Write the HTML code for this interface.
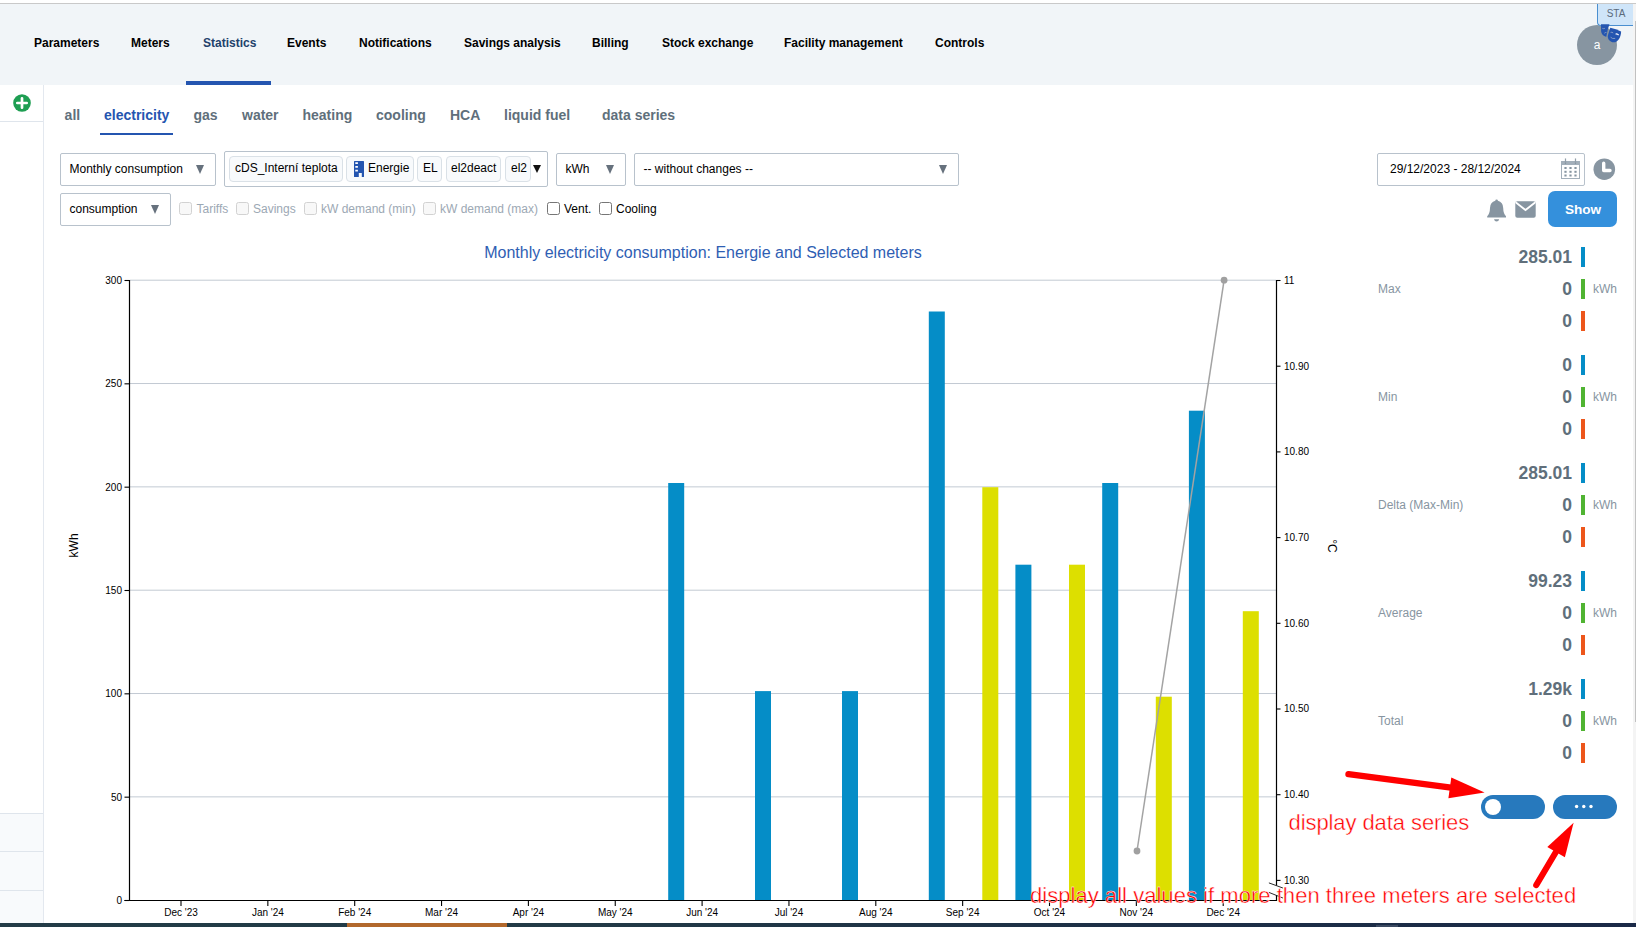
<!DOCTYPE html>
<html lang="en">
<head>
<meta charset="utf-8">
<title>Statistics</title>
<style>
*{box-sizing:border-box;margin:0;padding:0}
html,body{width:1636px;height:927px;overflow:hidden;background:#fff}
body{position:relative;font-family:"Liberation Sans",Arial,sans-serif;font-size:12px;color:#000}
.abs{position:absolute}
#topline{left:0;top:3px;width:1636px;height:1px;background:#c9c9c9}
#nav{left:0;top:4px;width:1633px;height:81px;background:#f1f5f8}
.nv{position:absolute;top:31px;height:16px;line-height:16px;font-weight:bold;font-size:12px;color:#000;white-space:nowrap}
#navsel{left:186px;top:81px;width:85px;height:4px;background:#2455b0}
#side{left:0;top:85px;width:44px;height:838px;border-right:1px solid #e3e8ef;background:#fff}
.sdiv{position:absolute;left:0;width:43px;height:1px;background:#dfe5ec}
.tb{position:absolute;top:106px;height:18px;line-height:18px;font-weight:bold;font-size:14px;color:#606f7b;white-space:nowrap}
.box{position:absolute;border:1px solid #b8c2cc;border-radius:2px;background:#fff}
.bt{position:absolute;white-space:nowrap;font-size:12px;line-height:14px;color:#000}
.arr{position:absolute;width:0;height:0;border-left:4.7px solid transparent;border-right:4.7px solid transparent;border-top:9.3px solid #66717d}
.tag{position:absolute;top:4px;height:26px;border:1px solid #dae1e7;border-radius:4px;background:#f8fafc;font-size:12px;line-height:23px;white-space:nowrap;color:#000}
.cb{position:absolute;top:202px;width:13px;height:13px;border:1px solid #767676;border-radius:2.5px;background:#fff}
.cb.d{border-color:#d2d2d2;background:#f8f8f8}
.cl{position:absolute;top:202px;height:14px;line-height:14px;font-size:12px;white-space:nowrap;color:#000}
.cl.d{color:#9ca8b4}
.sl{position:absolute;left:1378px;font-size:12px;line-height:14px;color:#8795a1;white-space:nowrap}
.sv{position:absolute;right:64px;font-size:17.5px;line-height:20px;font-weight:bold;color:#606f7b;white-space:nowrap;text-align:right}
.su{position:absolute;left:1593px;font-size:12px;line-height:14px;color:#8795a1;white-space:nowrap}
.bar{position:absolute;left:1581px;width:4px;height:20px}
.red{position:absolute;color:#ff0000;font-size:22px;line-height:26px;white-space:nowrap;-webkit-text-stroke:0.4px #fff;letter-spacing:0.035px}
</style>
</head>
<body>
<div class="abs" id="topline"></div>
<div class="abs" id="nav">
  <span class="nv" style="left:34px">Parameters</span>
  <span class="nv" style="left:131px">Meters</span>
  <span class="nv" style="left:203px;color:#22416b">Statistics</span>
  <span class="nv" style="left:287px">Events</span>
  <span class="nv" style="left:359px">Notifications</span>
  <span class="nv" style="left:464px">Savings analysis</span>
  <span class="nv" style="left:592px">Billing</span>
  <span class="nv" style="left:662px">Stock exchange</span>
  <span class="nv" style="left:784px">Facility management</span>
  <span class="nv" style="left:935px">Controls</span>
</div>
<div class="abs" id="navsel"></div>

<div class="abs" id="side">
  <svg class="abs" style="left:13px;top:9px" width="18" height="18" viewBox="0 0 18 18"><circle cx="9" cy="9" r="8.8" fill="#1e9e52"/><path d="M9 4.3V13.7M4.3 9H13.7" stroke="#fff" stroke-width="2.7" stroke-linecap="round"/></svg>
  <div class="sdiv" style="top:36px"></div>
  <div class="abs" style="left:0;top:728px;width:43px;height:110px;background:#f8fafc"></div>
  <div class="sdiv" style="top:728px"></div>
  <div class="sdiv" style="top:766px"></div>
  <div class="sdiv" style="top:805px"></div>
</div>
<!-- tabs -->
<span class="tb" style="left:64.6px">all</span>
<span class="tb" style="left:104px;color:#2455b0">electricity</span>
<div class="abs" style="left:100px;top:133px;width:73px;height:2px;background:#2455b0"></div>
<span class="tb" style="left:193.5px">gas</span>
<span class="tb" style="left:242px">water</span>
<span class="tb" style="left:302.5px">heating</span>
<span class="tb" style="left:376px">cooling</span>
<span class="tb" style="left:450px">HCA</span>
<span class="tb" style="left:504px">liquid fuel</span>
<span class="tb" style="left:602px">data series</span>
<!-- filter row 1 -->
<div class="box" style="left:60px;top:153px;width:156px;height:33px"><span class="bt" style="left:8.5px;top:8px">Monthly consumption</span><i class="arr" style="left:134.9px;top:11px"></i></div>
<div class="box" style="left:224px;top:151px;width:324px;height:36px">
  <span class="tag" style="left:4px;width:114px;padding-left:5px">cDS_Interní teplota</span>
  <span class="tag" style="left:121px;width:68px;padding-left:21px">Energie</span>
  <span class="tag" style="left:192px;width:25px;padding-left:5px">EL</span>
  <span class="tag" style="left:221px;width:55px;padding-left:4px">el2deact</span>
  <span class="tag" style="left:280px;width:26px;padding-left:5px">el2</span>
  <i class="arr" style="left:308.2px;top:13px;border-top-color:#111;border-left-width:4.3px;border-right-width:4.3px;border-top-width:8.2px"></i>
</div>
<div class="box" style="left:556px;top:153px;width:70px;height:33px"><span class="bt" style="left:8.5px;top:8px">kWh</span><i class="arr" style="left:49.3px;top:11px"></i></div>
<div class="box" style="left:634px;top:153px;width:325px;height:33px"><span class="bt" style="left:8.5px;top:8px">-- without changes --</span><i class="arr" style="left:303.5px;top:11px"></i></div>
<div class="box" style="left:1377px;top:153px;width:208px;height:33px"><span class="bt" style="left:12px;top:8px">29/12/2023 - 28/12/2024</span></div>
<!-- filter row 2 -->
<div class="box" style="left:60px;top:193px;width:111px;height:33px"><span class="bt" style="left:8.5px;top:8px">consumption</span><i class="arr" style="left:89.6px;top:11px"></i></div>
<i class="cb d" style="left:179px"></i><span class="cl d" style="left:196.5px">Tariffs</span>
<i class="cb d" style="left:236px"></i><span class="cl d" style="left:253px">Savings</span>
<i class="cb d" style="left:304px"></i><span class="cl d" style="left:321px">kW demand (min)</span>
<i class="cb d" style="left:423px"></i><span class="cl d" style="left:440px">kW demand (max)</span>
<i class="cb" style="left:547px"></i><span class="cl" style="left:564px">Vent.</span>
<i class="cb" style="left:599px"></i><span class="cl" style="left:616px">Cooling</span>
<div class="abs" style="left:1548px;top:191px;width:69px;height:36px;border-radius:7px;background:#3490dc;color:#fff;font-weight:bold;font-size:13.6px;line-height:37px;text-align:center;padding-left:1px">Show</div>
<svg class="abs" style="left:0;top:235px" width="1360" height="688" viewBox="0 235 1360 688" font-family="Liberation Sans, Arial, sans-serif">
<text x="703" y="258" text-anchor="middle" font-size="16" fill="#2f5eb3">Monthly electricity consumption: Energie and Selected meters</text>
<path d="M129.5 796.87H1276.5" stroke="#c3cad3" stroke-width="1"/>
<path d="M129.5 693.53H1276.5" stroke="#c3cad3" stroke-width="1"/>
<path d="M129.5 590.20H1276.5" stroke="#c3cad3" stroke-width="1"/>
<path d="M129.5 486.87H1276.5" stroke="#c3cad3" stroke-width="1"/>
<path d="M129.5 383.53H1276.5" stroke="#c3cad3" stroke-width="1"/>
<path d="M129.5 280.20H1276.5" stroke="#c3cad3" stroke-width="1"/>
<rect x="668.2" y="483.0" width="16" height="417.5" fill="#058dc7"/>
<rect x="755" y="691.1" width="16" height="209.4" fill="#058dc7"/>
<rect x="842" y="691.1" width="16" height="209.4" fill="#058dc7"/>
<rect x="928.8" y="311.5" width="16" height="589.0" fill="#058dc7"/>
<rect x="982.3" y="487.2" width="16" height="413.3" fill="#dddf00"/>
<rect x="1015.4" y="564.7" width="16" height="335.8" fill="#058dc7"/>
<rect x="1069" y="564.7" width="16" height="335.8" fill="#dddf00"/>
<rect x="1102.2" y="483.0" width="16" height="417.5" fill="#058dc7"/>
<rect x="1155.8" y="696.7" width="16" height="203.8" fill="#dddf00"/>
<rect x="1188.9" y="410.7" width="16" height="489.8" fill="#058dc7"/>
<rect x="1242.8" y="611.2" width="16" height="289.3" fill="#dddf00"/>
<path d="M1137 851L1224.1 280.2" stroke="#a3a3a3" stroke-width="1.5" fill="none"/>
<circle cx="1137" cy="851" r="3.4" fill="#a0a0a0"/><circle cx="1224.1" cy="280.2" r="3.4" fill="#a0a0a0"/>
<path d="M129.5 280V900.5M124.5 900.5H1276.5" stroke="#000" stroke-width="1.2" fill="none"/>
<path d="M1276.5 280V885.6M1276.5 895.2V901" stroke="#000" stroke-width="1.2" fill="none"/>
<path d="M124.5 900.50H129.5" stroke="#000" stroke-width="1.1"/>
<text x="122" y="904.00" text-anchor="end" font-size="10" fill="#000">0</text>
<path d="M124.5 797.17H129.5" stroke="#000" stroke-width="1.1"/>
<text x="122" y="800.67" text-anchor="end" font-size="10" fill="#000">50</text>
<path d="M124.5 693.83H129.5" stroke="#000" stroke-width="1.1"/>
<text x="122" y="697.33" text-anchor="end" font-size="10" fill="#000">100</text>
<path d="M124.5 590.50H129.5" stroke="#000" stroke-width="1.1"/>
<text x="122" y="594.00" text-anchor="end" font-size="10" fill="#000">150</text>
<path d="M124.5 487.17H129.5" stroke="#000" stroke-width="1.1"/>
<text x="122" y="490.67" text-anchor="end" font-size="10" fill="#000">200</text>
<path d="M124.5 383.83H129.5" stroke="#000" stroke-width="1.1"/>
<text x="122" y="387.33" text-anchor="end" font-size="10" fill="#000">250</text>
<path d="M124.5 280.50H129.5" stroke="#000" stroke-width="1.1"/>
<text x="122" y="284.00" text-anchor="end" font-size="10" fill="#000">300</text>
<path d="M1276.5 280.50H1280.5" stroke="#000" stroke-width="1.1"/>
<text x="1284" y="283.90" font-size="10" fill="#000">11</text>
<path d="M1276.5 366.20H1280.5" stroke="#000" stroke-width="1.1"/>
<text x="1284" y="369.60" font-size="10" fill="#000">10.90</text>
<path d="M1276.5 451.90H1280.5" stroke="#000" stroke-width="1.1"/>
<text x="1284" y="455.30" font-size="10" fill="#000">10.80</text>
<path d="M1276.5 537.60H1280.5" stroke="#000" stroke-width="1.1"/>
<text x="1284" y="541.00" font-size="10" fill="#000">10.70</text>
<path d="M1276.5 623.30H1280.5" stroke="#000" stroke-width="1.1"/>
<text x="1284" y="626.70" font-size="10" fill="#000">10.60</text>
<path d="M1276.5 709.00H1280.5" stroke="#000" stroke-width="1.1"/>
<text x="1284" y="712.40" font-size="10" fill="#000">10.50</text>
<path d="M1276.5 794.70H1280.5" stroke="#000" stroke-width="1.1"/>
<text x="1284" y="798.10" font-size="10" fill="#000">10.40</text>
<path d="M1276.5 880.40H1280.5" stroke="#000" stroke-width="1.1"/>
<text x="1284" y="883.80" font-size="10" fill="#000">10.30</text>
<path d="M181.00 900.5V906" stroke="#000" stroke-width="1.1"/>
<text x="181.00" y="915.8" text-anchor="middle" font-size="10" fill="#000">Dec '23</text>
<path d="M267.85 900.5V906" stroke="#000" stroke-width="1.1"/>
<text x="267.85" y="915.8" text-anchor="middle" font-size="10" fill="#000">Jan '24</text>
<path d="M354.70 900.5V906" stroke="#000" stroke-width="1.1"/>
<text x="354.70" y="915.8" text-anchor="middle" font-size="10" fill="#000">Feb '24</text>
<path d="M441.55 900.5V906" stroke="#000" stroke-width="1.1"/>
<text x="441.55" y="915.8" text-anchor="middle" font-size="10" fill="#000">Mar '24</text>
<path d="M528.40 900.5V906" stroke="#000" stroke-width="1.1"/>
<text x="528.40" y="915.8" text-anchor="middle" font-size="10" fill="#000">Apr '24</text>
<path d="M615.25 900.5V906" stroke="#000" stroke-width="1.1"/>
<text x="615.25" y="915.8" text-anchor="middle" font-size="10" fill="#000">May '24</text>
<path d="M702.10 900.5V906" stroke="#000" stroke-width="1.1"/>
<text x="702.10" y="915.8" text-anchor="middle" font-size="10" fill="#000">Jun '24</text>
<path d="M788.95 900.5V906" stroke="#000" stroke-width="1.1"/>
<text x="788.95" y="915.8" text-anchor="middle" font-size="10" fill="#000">Jul '24</text>
<path d="M875.80 900.5V906" stroke="#000" stroke-width="1.1"/>
<text x="875.80" y="915.8" text-anchor="middle" font-size="10" fill="#000">Aug '24</text>
<path d="M962.65 900.5V906" stroke="#000" stroke-width="1.1"/>
<text x="962.65" y="915.8" text-anchor="middle" font-size="10" fill="#000">Sep '24</text>
<path d="M1049.50 900.5V906" stroke="#000" stroke-width="1.1"/>
<text x="1049.50" y="915.8" text-anchor="middle" font-size="10" fill="#000">Oct '24</text>
<path d="M1136.35 900.5V906" stroke="#000" stroke-width="1.1"/>
<text x="1136.35" y="915.8" text-anchor="middle" font-size="10" fill="#000">Nov '24</text>
<path d="M1223.20 900.5V906" stroke="#000" stroke-width="1.1"/>
<text x="1223.20" y="915.8" text-anchor="middle" font-size="10" fill="#000">Dec '24</text>
<text transform="translate(78.2,545.4) rotate(-90)" text-anchor="middle" font-size="12" fill="#000">kWh</text>
<text transform="translate(1328,546) rotate(90)" text-anchor="middle" font-size="12" fill="#000">°C</text>
<path d="M1268.9 882.9L1282.9 888M1268.9 892.4L1282.9 898" stroke="#111" stroke-width="0.9" fill="none"/>
</svg>
<span class="sl" style="top:282px">Max</span>
<span class="su" style="top:282px">kWh</span>
<span class="sv" style="top:247px">285.01</span><i class="bar" style="top:247px;background:#058dc7"></i>
<span class="sv" style="top:279px">0</span><i class="bar" style="top:279px;background:#50b432"></i>
<span class="sv" style="top:311px">0</span><i class="bar" style="top:311px;background:#ed561b"></i>
<span class="sl" style="top:390px">Min</span>
<span class="su" style="top:390px">kWh</span>
<span class="sv" style="top:355px">0</span><i class="bar" style="top:355px;background:#058dc7"></i>
<span class="sv" style="top:387px">0</span><i class="bar" style="top:387px;background:#50b432"></i>
<span class="sv" style="top:419px">0</span><i class="bar" style="top:419px;background:#ed561b"></i>
<span class="sl" style="top:498px">Delta (Max-Min)</span>
<span class="su" style="top:498px">kWh</span>
<span class="sv" style="top:463px">285.01</span><i class="bar" style="top:463px;background:#058dc7"></i>
<span class="sv" style="top:495px">0</span><i class="bar" style="top:495px;background:#50b432"></i>
<span class="sv" style="top:527px">0</span><i class="bar" style="top:527px;background:#ed561b"></i>
<span class="sl" style="top:606px">Average</span>
<span class="su" style="top:606px">kWh</span>
<span class="sv" style="top:571px">99.23</span><i class="bar" style="top:571px;background:#058dc7"></i>
<span class="sv" style="top:603px">0</span><i class="bar" style="top:603px;background:#50b432"></i>
<span class="sv" style="top:635px">0</span><i class="bar" style="top:635px;background:#ed561b"></i>
<span class="sl" style="top:714px">Total</span>
<span class="su" style="top:714px">kWh</span>
<span class="sv" style="top:679px">1.29k</span><i class="bar" style="top:679px;background:#058dc7"></i>
<span class="sv" style="top:711px">0</span><i class="bar" style="top:711px;background:#50b432"></i>
<span class="sv" style="top:743px">0</span><i class="bar" style="top:743px;background:#ed561b"></i>
<!-- toggles -->
<div class="abs" style="left:1481px;top:795px;width:64px;height:24px;border-radius:12px;background:#2779bd"></div>
<div class="abs" style="left:1485px;top:799px;width:16px;height:16px;border-radius:8px;background:#fff"></div>
<div class="abs" style="left:1553px;top:795px;width:64px;height:24px;border-radius:12px;background:#2779bd"></div>
<svg class="abs" style="left:1553px;top:795px" width="64" height="24"><circle cx="23.6" cy="11.5" r="1.7" fill="#fff"/><circle cx="30.8" cy="11.5" r="1.7" fill="#fff"/><circle cx="38" cy="11.5" r="1.7" fill="#fff"/></svg>
<!-- annotations -->
<svg class="abs" style="left:1330px;top:760px" width="306" height="140" viewBox="1330 760 306 140">
  <path d="M1348.5 774.2L1451 787.6" stroke="#ff0000" stroke-width="6.4" stroke-linecap="round" fill="none"/>
  <path d="M1484.6 792.4L1451.3 777.6L1448.4 798.2Z" fill="#ff0000"/>
  <path d="M1536.3 885L1556.5 851" stroke="#ff0000" stroke-width="6.2" stroke-linecap="round" fill="none"/>
  <path d="M1573.6 822.8L1547.3 846.9L1564.9 857.2Z" fill="#ff0000"/>
</svg>
<span class="red" style="left:1288.5px;top:810.2px;letter-spacing:-0.08px">display data series</span>
<span class="red" style="left:1030px;top:883.4px">display all values if more then three meters are selected</span>
<!-- bottom bar -->
<div class="abs" style="left:0;top:923px;width:1636px;height:4px;background:linear-gradient(90deg,#233c47 0%,#223a46 35%,#1d2f46 70%,#1a2947 100%)"></div>
<div class="abs" style="left:1376px;top:925px;width:22px;height:2px;background:#3b4a62"></div>
<div class="abs" style="left:347px;top:923px;width:160px;height:4px;background:#b2682c"></div>
<!-- scrollbar -->
<div class="abs" style="left:1633px;top:4px;width:3px;height:919px;background:#f4f4f4"></div>
<div class="abs" style="left:1635px;top:21px;width:1px;height:701px;background:#c1c1c1"></div>

<!-- avatar + STA -->
<div class="abs" style="left:1577px;top:25px;width:40px;height:40px;border-radius:20px;background:#8795a1;color:#fff;font-size:12px;line-height:40px;text-align:center">a</div>
<svg class="abs" style="left:1596px;top:20px;z-index:3" width="30" height="26" viewBox="1596 20 30 26">
  <path d="M1601 24.2H1609.5L1607.9 29L1606.3 36.7C1603.4 36.4 1601.3 34 1601.1 31Z" fill="#2455b0"/>
  <path d="M1610.3 27.8Q1616 28.8 1621.1 31.4C1621 37.5 1617.6 42.3 1613.7 42.3C1610.4 42.3 1607 39 1607.9 35.2Z" fill="#2455b0"/>
  <path d="M1615.6 34.2Q1617.2 33.2 1618.6 35.2" stroke="#fff" stroke-width="1.2" fill="none"/>
  <path d="M1610.6 32.4Q1612 31.8 1613.2 33M1610.6 37.2Q1612.4 39.2 1615.2 38.4M1602.4 28.4Q1603.6 28.9 1604.8 28.4M1604.4 33.2Q1605.4 32.2 1606.4 32.6" stroke="#8fa3c6" stroke-width="0.9" fill="none"/>
</svg>
<div class="abs" style="left:1597px;top:4px;width:36px;height:22px;border-left:1px solid #4a8fd0;border-bottom:1px solid #4a8fd0;border-bottom-left-radius:4px;background:#cfe5f9;color:#5b6b7c;font-size:10px;line-height:19px;text-align:center;padding-left:1px">STA</div>
<!-- building icon -->
<svg class="abs" style="left:353px;top:160px" width="12" height="18" viewBox="353 160 12 18">
  <path d="M354.6 161H363.4Q364 161 364 161.6V176.4Q364 177 363.4 177H361.8V173H358.8V177H354.6Q354 177 354 176.4V161.6Q354 161 354.6 161Z" fill="#2455b0"/>
  <path d="M355.3 162.3H357.9V164.1H355.3ZM355.3 166H357.9V167.8H355.3ZM355.3 169.8H357.9V171.6H355.3Z" fill="#fff"/>
</svg>
<!-- calendar icon -->
<svg class="abs" style="left:1560px;top:157px" width="22" height="23" viewBox="1560 157 22 23">
  <rect x="1561.5" y="161.5" width="18" height="17" fill="#fff" stroke="#a3afba" stroke-width="1"/>
  <rect x="1561" y="161" width="19" height="4" fill="#a3afba"/>
  <path d="M1565.5 158.5V164M1575.5 158.5V164" stroke="#8795a1" stroke-width="1.2"/>
  <path d="M1565.5 159V163M1575.5 159V163" stroke="#fff" stroke-width="0.1"/>
  <g fill="#8795a1">
   <rect x="1564.4" y="167" width="2.2" height="2"/><rect x="1569.4" y="167" width="2.2" height="2"/><rect x="1574.4" y="167" width="2.2" height="2"/>
   <rect x="1564.4" y="170.8" width="2.2" height="2"/><rect x="1569.4" y="170.8" width="2.2" height="2"/><rect x="1574.4" y="170.8" width="2.2" height="2"/>
   <rect x="1564.4" y="174.5" width="2.2" height="2"/><rect x="1569.4" y="174.5" width="2.2" height="2"/><rect x="1574.4" y="174.5" width="2.2" height="2"/>
  </g>
</svg>
<!-- clock -->
<svg class="abs" style="left:1592px;top:157px" width="25" height="25" viewBox="1592 157 25 25">
  <circle cx="1604.3" cy="169.2" r="10.8" fill="#8795a1"/>
  <path d="M1603.7 163.2V170.5H1610" stroke="#fff" stroke-width="3.4" stroke-linecap="round" stroke-linejoin="round" fill="none"/>
</svg>
<!-- bell -->
<svg class="abs" style="left:1485px;top:197px" width="24" height="27" viewBox="1485 197 24 27">
  <path d="M1496.6 199.4Q1497.9 199.4 1497.9 200.8Q1503 202 1503.2 208Q1503.3 213.5 1506 216.2V217.6H1487.2V216.2Q1489.9 213.5 1490 208Q1490.2 202 1495.3 200.8Q1495.3 199.4 1496.6 199.4Z" fill="#8795a1"/>
  <path d="M1494 219.2H1499.2Q1498.6 221.6 1496.6 221.6Q1494.6 221.6 1494 219.2Z" fill="#8795a1"/>
</svg>
<!-- mail -->
<svg class="abs" style="left:1514px;top:200px" width="24" height="20" viewBox="1514 200 24 20">
  <rect x="1515.3" y="201.3" width="20.4" height="16.5" rx="2" fill="#8795a1"/>
  <path d="M1515.6 202.2L1525.5 210L1535.4 202.2" stroke="#fff" stroke-width="1.8" fill="none"/>
</svg>



</body>
</html>
